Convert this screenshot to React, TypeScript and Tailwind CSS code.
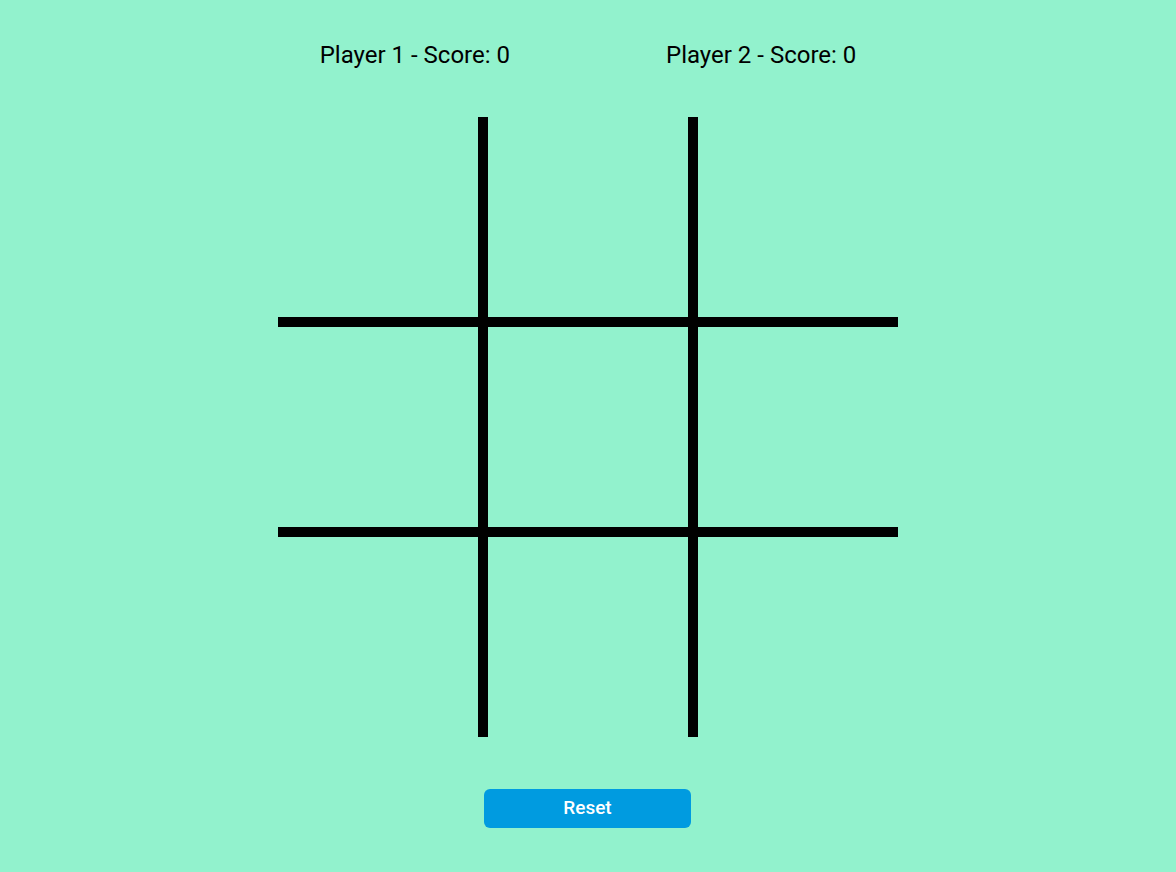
import { useState } from 'react';

type Cell = 'X' | 'O' | null;

export default function App() {
  const [board, setBoard] = useState<Cell[]>(Array(9).fill(null));
  const [turn, setTurn] = useState<'X' | 'O'>('X');
  const [scores] = useState({ p1: 0, p2: 0 });

  const play = (i: number) => {
    if (board[i]) return;
    const next = [...board];
    next[i] = turn;
    setBoard(next);
    setTurn(turn === 'X' ? 'O' : 'X');
  };

  const reset = () => {
    setBoard(Array(9).fill(null));
    setTurn('X');
  };

  // borders make the # lines
  const cellClass = (i: number) => {
    const col = i % 3;
    const row = Math.floor(i / 3);
    const cls = ['flex items-center justify-center text-7xl cursor-pointer border-black'];
    cls.push(col === 1 ? 'w-[220px] border-x-[10px]' : 'w-[200px]');
    cls.push(row === 1 ? 'h-[220px] border-y-[10px]' : 'h-[200px]');
    return cls.join(' ');
  };

  return (
    <div
      className="min-h-screen w-full bg-[#92f2cd] flex flex-col items-center text-black"
      style={{ fontFamily: 'Roboto, "Liberation Sans", sans-serif' }}
    >
      <div className="flex justify-center gap-[156px] pt-[40px] text-[24px] leading-[30px]">
        <span>Player 1 - Score: {scores.p1}</span>
        <span>Player 2 - Score: {scores.p2}</span>
      </div>

      <div className="grid grid-cols-[200px_220px_200px] mt-[47px]">
        {board.map((v, i) => (
          <div key={i} className={cellClass(i)} onClick={() => play(i)}>
            {v}
          </div>
        ))}
      </div>

      <button
        onClick={reset}
        className="mt-[52px] mr-[1px] w-[207px] h-[39px] rounded-md bg-[#009be0] text-white text-[19px] font-medium"
      >
        Reset
      </button>
    </div>
  );
}
